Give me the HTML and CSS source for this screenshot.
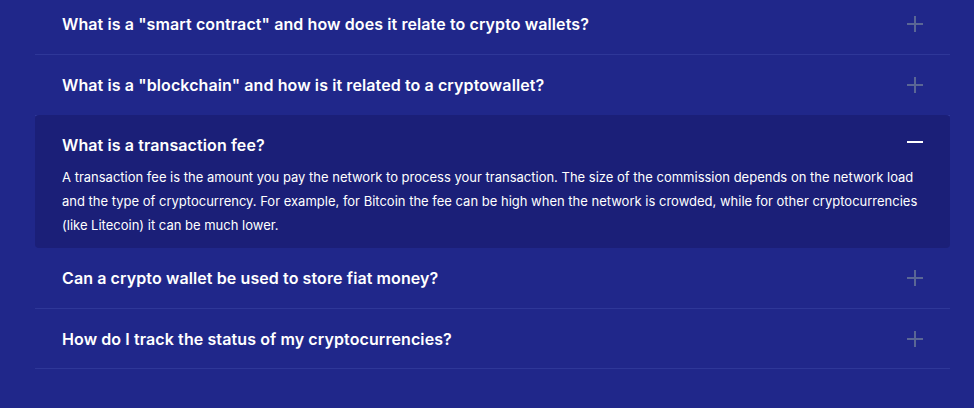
FILE: index.html
```html
<!DOCTYPE html>
<html lang="en">
<head>
<meta charset="UTF-8">
<meta name="viewport" content="width=device-width, initial-scale=1.0">
<title>FAQ</title>
<link rel="stylesheet" href="styles.css">
</head>
<body>
    <div class="faq">
        <div class="item">
            <div class="question">
                <span>What is a "smart contract" and how does it relate to crypto wallets?</span>
                <span class="icon plus"></span>
            </div>
        </div>
        <div class="item">
            <div class="question">
                <span>What is a "blockchain" and how is it related to a cryptowallet?</span>
                <span class="icon plus"></span>
            </div>
        </div>
        <div class="item open">
            <div class="question">
                <span>What is a transaction fee?</span>
                <span class="icon minus"></span>
            </div>
            <p class="answer">A transaction fee is the amount you pay the network to process your transaction. The size of the commission depends on the network load and the type of cryptocurrency. For example, for Bitcoin the fee can be high when the network is crowded, while for other cryptocurrencies (like Litecoin) it can be much lower.</p>
        </div>
        <div class="item">
            <div class="question">
                <span>Can a crypto wallet be used to store fiat money?</span>
                <span class="icon plus"></span>
            </div>
        </div>
        <div class="item last">
            <div class="question">
                <span>How do I track the status of my cryptocurrencies?</span>
                <span class="icon plus"></span>
            </div>
        </div>
    </div>
</body>
</html>
```

FILE: styles.css
```css
body {
    margin: 0;
    background: #20278a;
    font-family: Inter, "Open Sans", sans-serif;
    color: #fff;
}
.faq {
    width: 915px;
    margin: -6px 0 0 35px;
}
.item {
    border-bottom: 1px solid #2e3798;
    padding: 0 27px;
}
.item.open {
    background: #1b1f78;
    border-bottom: none;
    border-radius: 4px;
    padding-bottom: 11px;
    margin-top: -1px;
}
.question {
    display: flex;
    justify-content: space-between;
    align-items: center;
    height: 60px;
    font-size: 16px;
    font-weight: 600;
    letter-spacing: 0.1px;
}
.last .question {
    height: 59px;
}
.icon {
    position: relative;
    width: 16px;
    height: 16px;
    flex: none;
}
.plus::before,
.plus::after,
.minus::before {
    content: "";
    position: absolute;
}
.plus::before {
    left: 0;
    right: 0;
    top: 7px;
    height: 2px;
    background: #5a6695;
}
.plus::after {
    top: 0;
    bottom: 0;
    left: 7px;
    width: 2px;
    background: #5a6695;
}
.minus::before {
    left: 0;
    right: 0;
    top: 4px;
    height: 2px;
    background: #fff;
}
.answer {
    margin: -10px 0 0;
    font-size: 13px;
    line-height: 24px;
}
```
